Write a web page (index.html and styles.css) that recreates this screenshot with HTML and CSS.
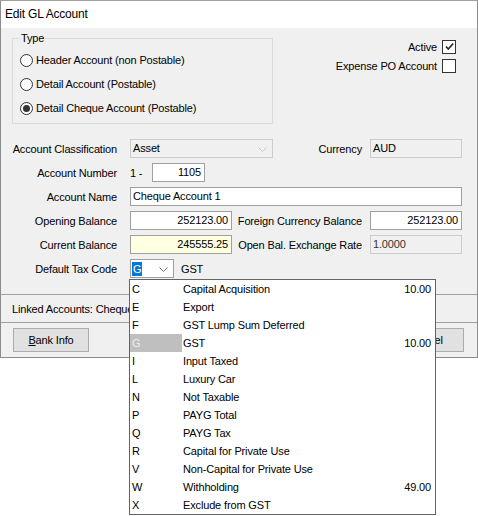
FILE: index.html
```html
<!DOCTYPE html>
<html>
<head>
    <title>Edit GL Account</title>
    <link rel="stylesheet" href="styles.css">
</head>
<body>
    <div class="window">
        <div class="titlebar">Edit GL Account</div>

        <div class="top">
            <fieldset class="type-group">
                <legend>Type</legend>
                <div class="radio"><span class="circle"></span>Header Account (non Postable)</div>
                <div class="radio"><span class="circle"></span>Detail Account (Postable)</div>
                <div class="radio"><span class="circle on"></span>Detail Cheque Account (Postable)</div>
            </fieldset>
            <div class="flags">
                <div class="flag">Active <span class="box">
                    <svg width="11" height="11" viewBox="0 0 11 11"><path d="M2 5.5 L4.3 8 L9.2 2.5" fill="none" stroke="#222" stroke-width="1.6"/></svg>
                </span></div>
                <div class="flag">Expense PO Account <span class="box"></span></div>
            </div>
        </div>

        <div class="form">
            <div class="row">
                <span class="label">Account Classification</span>
                <div class="field combo disabled w-class">Asset
                    <svg class="arrow" width="9" height="5" viewBox="0 0 9 5"><path d="M0.5 0.5 L4.5 4.5 L8.5 0.5" fill="none" stroke="#c8c8c8" stroke-width="1"/></svg>
                </div>
                <span class="label-right">Currency</span>
                <div class="field disabled w-right">AUD</div>
            </div>
            <div class="row">
                <span class="label">Account Number</span>
                <span class="prefix">1 -</span>
                <div class="field num w-accno">1105</div>
            </div>
            <div class="row">
                <span class="label">Account Name</span>
                <div class="field w-name">Cheque Account 1</div>
            </div>
            <div class="row">
                <span class="label">Opening Balance</span>
                <div class="field num w-bal">252123.00</div>
                <span class="label-right">Foreign Currency Balance</span>
                <div class="field num w-right">252123.00</div>
            </div>
            <div class="row">
                <span class="label">Current Balance</span>
                <div class="field num w-bal readonly">245555.25</div>
                <span class="label-right">Open Bal. Exchange Rate</span>
                <div class="field disabled grey w-right">1.0000</div>
            </div>
            <div class="row">
                <span class="label">Default Tax Code</span>
                <div class="field combo w-tax"><span class="sel">G</span>
                    <svg class="arrow" width="9" height="5" viewBox="0 0 9 5"><path d="M0.5 0.5 L4.5 4.5 L8.5 0.5" fill="none" stroke="#707070" stroke-width="1"/></svg>
                </div>
                <span class="tax-name">GST</span>
            </div>
        </div>

        <div class="linked">Linked Accounts: Cheque Account 1</div>

        <div class="buttons">
            <button class="btn"><u>B</u>ank Info</button>
            <button class="btn push">OK</button>
            <button class="btn">Cancel</button>
        </div>
    </div>

    <!-- open tax code list -->
    <div class="dropdown">
        <div class="item"><span class="code">C</span><span class="desc">Capital Acquisition</span><span class="rate">10.00</span></div>
        <div class="item"><span class="code">E</span><span class="desc">Export</span><span class="rate"></span></div>
        <div class="item"><span class="code">F</span><span class="desc">GST Lump Sum Deferred</span><span class="rate"></span></div>
        <div class="item current"><span class="code">G</span><span class="desc">GST</span><span class="rate">10.00</span></div>
        <div class="item"><span class="code">I</span><span class="desc">Input Taxed</span><span class="rate"></span></div>
        <div class="item"><span class="code">L</span><span class="desc">Luxury Car</span><span class="rate"></span></div>
        <div class="item"><span class="code">N</span><span class="desc">Not Taxable</span><span class="rate"></span></div>
        <div class="item"><span class="code">P</span><span class="desc">PAYG Total</span><span class="rate"></span></div>
        <div class="item"><span class="code">Q</span><span class="desc">PAYG Tax</span><span class="rate"></span></div>
        <div class="item"><span class="code">R</span><span class="desc">Capital for Private Use</span><span class="rate"></span></div>
        <div class="item"><span class="code">V</span><span class="desc">Non-Capital for Private Use</span><span class="rate"></span></div>
        <div class="item"><span class="code">W</span><span class="desc">Withholding</span><span class="rate">49.00</span></div>
        <div class="item"><span class="code">X</span><span class="desc">Exclude from GST</span><span class="rate"></span></div>
    </div>
</body>
</html>
```

FILE: styles.css
```css
html, body {
    height: 516px;
}

body {
    margin: 0;
    background-color: #fff;
    font-family: "Liberation Sans", Arial, sans-serif;
    font-size: 11px;
    letter-spacing: -0.15px;
    color: #000;
    position: relative;
    overflow: hidden;
}

.window {
    width: 476px;
    background-color: #f0f0f0;
    border: 1px solid #8c8c8c;
    border-top-color: #a0a0a0;
}

.titlebar {
    height: 27px;
    line-height: 27px;
    padding-left: 4px;
    background-color: #fff;
    font-size: 12px;
    letter-spacing: -0.2px;
}

/* type group + flags */
.top {
    display: flex;
    align-items: flex-start;
}

.type-group {
    margin: 4px 0 0 11px;
    padding: 3px 0 3px 7px;
    width: 252px;
    border: 1px solid #dcdcdc;
}

.type-group legend {
    padding: 0 1px;
    line-height: 13px;
}

.radio {
    display: flex;
    align-items: center;
    height: 24px;
}

.circle {
    width: 11px;
    height: 11px;
    border: 1px solid #333;
    border-radius: 50%;
    background-color: #fff;
    margin-right: 3px;
    display: flex;
    align-items: center;
    justify-content: center;
}

.circle.on::after {
    content: "";
    width: 7px;
    height: 7px;
    border-radius: 50%;
    background-color: #333;
}

.flags {
    margin: 9px 21px 0 auto;
}

.flag {
    display: flex;
    align-items: center;
    justify-content: flex-end;
    height: 19px;
}

.box {
    width: 12px;
    height: 12px;
    border: 1px solid #333;
    background-color: #fff;
    margin-left: 5px;
    display: flex;
    align-items: center;
    justify-content: center;
}

/* form rows */
.form {
    margin-top: 15px;
    padding-right: 15px;
}

.row {
    display: flex;
    align-items: center;
    height: 19px;
    margin-bottom: 5px;
}

.row:last-child {
    margin-bottom: 0;
}

.label {
    width: 116px;
    text-align: right;
    margin-right: 13px;
}

.label-right {
    margin-left: auto;
    margin-right: 8px;
}

.prefix {
    width: 22px;
}

.field {
    box-sizing: border-box;
    height: 19px;
    line-height: 17px;
    border: 1px solid #a0a0a0;
    background-color: #fff;
    padding: 0 3px 0 2px;
    white-space: nowrap;
    overflow: hidden;
}

.field.num {
    text-align: right;
}

.field.disabled {
    background-color: #f0f0f0;
    border-color: #cccccc;
}

.field.grey {
    color: #333;
}

.field.readonly {
    background-color: #ffffe1;
}

.combo {
    display: flex;
    align-items: center;
    position: relative;
}

.combo .arrow {
    position: absolute;
    right: 5px;
    top: 7px;
}

.combo .sel {
    background-color: #0078d7;
    color: #fff;
    line-height: 14px;
    padding: 0 1px;
}

.tax-name {
    margin-left: 7px;
}

.w-class { width: 143px; }
.w-right { width: 92px; }
.w-accno { width: 53px; }
.w-name { width: 332px; }
.w-bal { width: 102px; }
.w-tax { width: 44px; padding-left: 1px; }

/* bottom section */
.linked {
    margin-top: 16px;
    border-top: 1px solid #a0a0a0;
    height: 27px;
    line-height: 29px;
    padding-left: 11px;
}

.buttons {
    display: flex;
    border-top: 1px solid #a0a0a0;
    padding: 5px 13px 5px 12px;
}

.btn {
    width: 76px;
    height: 24px;
    font-family: inherit;
    font-size: 11px;
    letter-spacing: -0.15px;
    border: 1px solid #adadad;
    background-color: #e1e1e1;
    padding: 0;
    margin-right: 0;
}

.btn.push {
    margin-left: auto;
    margin-right: 7px;
}

/* dropdown list */
.dropdown {
    position: absolute;
    left: 129px;
    top: 279px;
    width: 305px;
    border: 1px solid #646464;
    background-color: #fff;
}

.item {
    display: flex;
    height: 18px;
    line-height: 18px;
}

.code {
    width: 50px;
    padding-left: 2px;
}

.desc {
    flex: 1;
    padding-left: 1px;
}

.rate {
    padding-right: 4px;
}

.item.current .code {
    background-color: #bfbfbf;
    color: #eeeeee;
}
```
